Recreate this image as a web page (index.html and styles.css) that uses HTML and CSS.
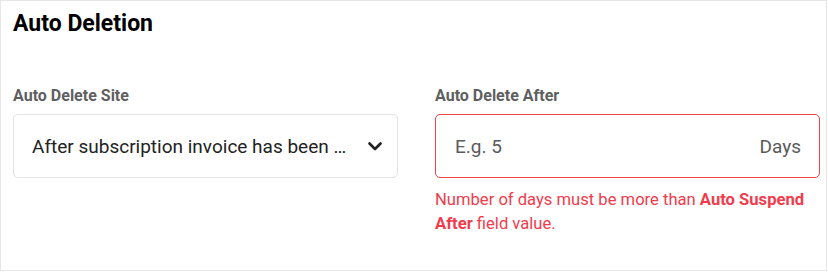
FILE: index.html
```html
<!DOCTYPE html>
<html>
<head>
<meta charset="utf-8">
<link rel="stylesheet" href="styles.css">
</head>
<body>
<div class="panel">
  <h2 class="title">Auto Deletion</h2>
  <div class="fields">
    <div class="field">
      <label class="label">Auto Delete Site</label>
      <div class="select">
        <span class="select-text">After subscription invoice has been paid</span>
        <svg class="chev" width="16" height="16" viewBox="0 0 16 16"><path d="M2.5 5.5 L8 11 L13.5 5.5" fill="none" stroke="#1f1f1f" stroke-width="2.6" stroke-linecap="round" stroke-linejoin="round"/></svg>
      </div>
    </div>
    <div class="field">
      <label class="label">Auto Delete After</label>
      <div class="input error">
        <span class="placeholder">E.g. 5</span>
        <span class="suffix">Days</span>
      </div>
      <p class="err">Number of days must be more than <b>Auto Suspend After</b> field value.</p>
    </div>
  </div>
</div>
</body>
</html>
```
FILE: styles.css
```css
* { box-sizing: border-box; }
html, body { margin: 0; padding: 0; background: #fff; }
body { font-family: Roboto, "Noto Sans", sans-serif; }
.panel {
  width: 827px;
  height: 271px;
  border: 1px solid #e6e6e6;
  padding: 8px 6px 0 12px;
}
.title {
  margin: 0;
  font-size: 23px;
  line-height: 30px;
  font-weight: 700;
  color: #000;
}
.fields {
  display: grid;
  grid-template-columns: 385px 385px;
  column-gap: 37px;
  margin-top: 47px;
}
.label {
  display: block;
  font-size: 16px;
  line-height: 20px;
  font-weight: 700;
  color: #5f5f5f;
  margin-bottom: 8px;
}
.select, .input {
  height: 64px;
  border: 1px solid #e3e3e3;
  border-radius: 5px;
  display: flex;
  align-items: center;
  padding: 0 14px 0 18px;
}
.select-text {
  flex: 1;
  min-width: 0;
  white-space: nowrap;
  overflow: hidden;
  text-overflow: ellipsis;
  font-size: 19px;
  color: #222;
  margin-right: 12px;
}
.chev { flex: none; }
.input { padding: 0 18px 0 19px; }
.input.error { border-color: #ef4444; }
.placeholder { flex: 1; font-size: 19px; color: #5a5a5a; }
.suffix { font-size: 19px; color: #5a5a5a; }
.err {
  margin: 10px 0 0;
  font-size: 16.6px;
  line-height: 24px;
  color: #f23b4c;
}
.err b { font-weight: 700; }
```
